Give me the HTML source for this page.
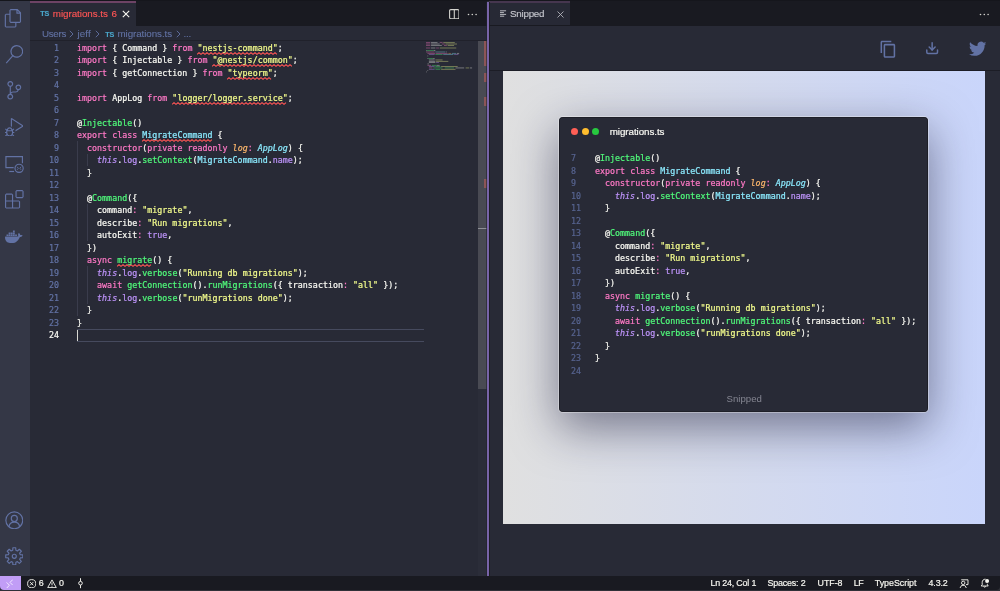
<!DOCTYPE html>
<html lang="en">
<head>
<meta charset="utf-8">
<title>migrations.ts — Snipped</title>
<style>
*{box-sizing:border-box;margin:0;padding:0}
html,body{width:1000px;height:591px;overflow:hidden;background:#282a36}
body{position:relative;font-family:"Liberation Sans",sans-serif;color:#f8f8f2;-webkit-font-smoothing:antialiased}
.abs{position:absolute}
#root{position:absolute;left:0;top:0;width:1000px;height:591px;will-change:transform}
#topstrip{left:0;top:0;width:1000px;height:1px;background:#15161c}
#activity{left:0;top:1px;width:30px;height:575px;background:#343746}
#activity svg{position:absolute;left:0;display:block}
#tabsL{left:30px;top:1px;width:457px;height:25px;background:#191a21}
#tabsR{left:489px;top:1px;width:511px;height:25px;background:#191a21}
.tab{-webkit-text-stroke:0.15px currentColor;position:absolute;top:0;height:25px;background:#282a36;font-size:9.8px;line-height:22px;white-space:nowrap}
.ts{position:absolute;top:-0.3px;color:#4aa5c9;font-size:7.2px;font-weight:bold;letter-spacing:-0.19px}
#sash{left:487px;top:1.500px;width:2.2px;height:574px;background:#7864a8;box-shadow:0.8px 0 0 #191a21,-0.6px 0 0 #22232c}
#crumbs{-webkit-text-stroke:0.1px currentColor;left:30px;top:26px;width:457px;height:15px;font-size:9.8px;line-height:15px;color:#6272a4;white-space:nowrap}
#crumbs span{position:absolute;top:0}
#crumbs .ts{top:0.5px}
pre{font-family:"DejaVu Sans Mono","Liberation Mono",monospace;font-size:8.3px;line-height:12.5px;letter-spacing:0.022px;white-space:pre;position:absolute;-webkit-text-stroke:0.22px currentColor}
.ln{color:#6272a4;text-align:right}
.cur{color:#f8f8f2}
.k{color:#ff79c6}.s{color:#f1fa8c}.g{color:#50fa7b}.c{color:#8be9fd}.p{color:#bd93f9}.o{color:#ffb86c}
.i{font-style:italic}
#status{left:0;top:575.5px;width:1000px;height:14px;border-radius:0 0 4px 4px;-webkit-text-stroke:0.18px currentColor;background:#191a21;font-size:8.9px;line-height:15.6px;color:#f8f8f2;white-space:nowrap}
#status span{position:absolute;top:0}
#remote{left:0;top:575.5px;width:21px;height:14px;background:#c19df6;border-radius:0 0 0 4px}
</style>
</head>
<body>
<div id="root">
<div id="topstrip" class="abs"></div>

<!-- activity bar -->
<div id="activity" class="abs"></div>
<svg class="abs" style="left:4.30px;top:9.30px" width="18.60" height="18.60" viewBox="0 0 24 24" ><path fill="#6272a4" d="M17.5 0h-9L7 1.5V6H2.5L1 7.5v15.07L2.5 24h12.07L16 22.57V18h4.7l1.3-1.43V4.5L17.5 0zm0 2.12l2.38 2.38H17.5V2.12zm-3 20.38h-12v-15H7v9.07L8.5 18h6v4.5zm6-6h-12v-15H16V6h4.5v10.5z"/></svg>
<svg class="abs" style="left:4.90px;top:45.30px" width="18.60" height="18.60" viewBox="0 0 24 24" ><path fill="#6272a4" d="M15.25 0a8.25 8.25 0 0 0-6.18 13.72L1 22.88l1.12 1 8.05-9.12A8.251 8.251 0 1 0 15.25.01V0zm0 15a6.75 6.75 0 1 1 0-13.5 6.75 6.75 0 0 1 0 13.5z"/></svg>
<svg class="abs" style="left:4.70px;top:81.30px" width="18.60" height="18.60" viewBox="0 0 24 24" ><path fill="#6272a4" d="M21.007 8.222A3.738 3.738 0 0 0 15.045 5.2a3.737 3.737 0 0 0 1.156 6.583 2.988 2.988 0 0 1-2.668 1.67h-2.99a4.456 4.456 0 0 0-2.989 1.165V7.4a3.737 3.737 0 1 0-1.494 0v9.117a3.776 3.776 0 1 0 1.816.099 2.99 2.99 0 0 1 2.668-1.667h2.99a4.484 4.484 0 0 0 4.223-3.039 3.736 3.736 0 0 0 3.25-3.687zM4.565 3.738a2.242 2.242 0 1 1 4.484 0 2.242 2.242 0 0 1-4.484 0zm4.484 16.441a2.242 2.242 0 1 1-4.484 0 2.242 2.242 0 0 1 4.484 0zm8.221-9.715a2.242 2.242 0 1 1 0-4.485 2.242 2.242 0 0 1 0 4.485z"/></svg>
<svg class="abs" style="left:4.70px;top:117.70px" width="18.60" height="18.60" viewBox="0 0 24 24" ><path fill="#6272a4" d="M10.94 13.5l-1.32 1.32a3.73 3.73 0 0 0-7.24 0L1.06 13.5 0 14.56l1.72 1.72-.22.22V18H0v1.5h1.5v.08c.077.489.214.966.41 1.42L0 22.94 1.06 24l1.65-1.65A4.308 4.308 0 0 0 6 24a4.31 4.31 0 0 0 3.29-1.65L10.94 24 12 22.94 10.09 21c.198-.464.336-.951.41-1.45v-.1H12V18h-1.5v-1.5l-.22-.22L12 14.56l-1.06-1.06zM6 13.5a2.25 2.25 0 0 1 2.25 2.25h-4.5A2.25 2.25 0 0 1 6 13.5zm3 6a3.33 3.33 0 0 1-3 3 3.33 3.33 0 0 1-3-3v-2.25h6v2.25zm14.76-9.9v1.26L13.5 17.37V15.6l8.5-5.37L9 2v9.46a5.07 5.07 0 0 0-1.5-.72V.63L8.64 0l15.12 9.6z"/></svg>
<svg class="abs" style="left:5.20px;top:154.70px" width="18.60" height="18.60" viewBox="0 0 24 24" ><g fill="none" stroke="#6272a4" stroke-width="1.5"><path d="M11.2 16.2H1.2V2h21.3v8.6"/><path d="M5.5 21.3h6.2" /><circle cx="18.2" cy="17.2" r="5.3"/><path d="M15.6 15.2l1.6 2-1.6 2M20.8 15.2l-1.6 2 1.6 2" stroke-width="1.1"/></g></svg>
<svg class="abs" style="left:5.10px;top:190.10px" width="18.60" height="18.60" viewBox="0 0 24 24" ><path fill="#6272a4" d="M13.5 1.5L15 0h7.5L24 1.5V9l-1.5 1.5H15L13.5 9V1.5zm1.5 0V9h7.5V1.5H15zM0 15V6l1.5-1.5H9L10.5 6v7.5H18l1.5 1.5v7.5L18 24H1.5L0 22.5V15zm9-1.5V6H1.5v7.5H9zM9 15H1.5v7.5H9V15zm1.5 7.5H18V15h-7.5v7.5z"/></svg>
<svg class="abs" style="left:5.20px;top:227.80px" width="17.60" height="17.60" viewBox="0 0 24 24" ><path fill="#6272a4" d="M13.983 11.078h2.119a.186.186 0 00.186-.185V9.006a.186.186 0 00-.186-.186h-2.119a.185.185 0 00-.185.185v1.888c0 .102.083.185.185.185m-2.954-5.43h2.118a.186.186 0 00.186-.186V3.574a.186.186 0 00-.186-.185h-2.118a.185.185 0 00-.185.185v1.888c0 .102.082.185.185.185m0 2.716h2.118a.187.187 0 00.186-.186V6.29a.186.186 0 00-.186-.185h-2.118a.185.185 0 00-.185.185v1.887c0 .102.082.185.185.186m-2.93 0h2.12a.186.186 0 00.184-.186V6.29a.185.185 0 00-.185-.185H8.1a.185.185 0 00-.185.185v1.887c0 .102.083.185.185.186m-2.964 0h2.119a.186.186 0 00.185-.186V6.29a.185.185 0 00-.185-.185H5.136a.186.186 0 00-.186.185v1.887c0 .102.084.185.186.186m5.893 2.715h2.118a.186.186 0 00.186-.185V9.006a.186.186 0 00-.186-.186h-2.118a.185.185 0 00-.185.185v1.888c0 .102.082.185.185.185m-2.93 0h2.12a.185.185 0 00.184-.185V9.006a.185.185 0 00-.184-.186h-2.12a.185.185 0 00-.184.185v1.888c0 .102.083.185.185.185m-2.964 0h2.119a.185.185 0 00.185-.185V9.006a.185.185 0 00-.184-.186h-2.12a.186.186 0 00-.186.186v1.887c0 .102.084.185.186.185m-2.92 0h2.12a.185.185 0 00.184-.185V9.006a.185.185 0 00-.184-.186h-2.12a.185.185 0 00-.184.185v1.888c0 .102.082.185.185.185M23.763 9.89c-.065-.051-.672-.51-1.954-.51-.338.001-.676.03-1.01.087-.248-1.7-1.653-2.53-1.716-2.566l-.344-.199-.226.327c-.284.438-.49.922-.612 1.43-.23.97-.09 1.882.403 2.661-.595.332-1.55.413-1.744.42H.751a.751.751 0 00-.75.748 11.376 11.376 0 00.692 4.062c.545 1.428 1.355 2.48 2.41 3.124 1.18.723 3.1 1.137 5.275 1.137.983.003 1.963-.086 2.93-.266a12.248 12.248 0 003.823-1.389c.98-.567 1.86-1.288 2.61-2.136 1.252-1.418 1.998-2.997 2.553-4.4h.221c1.372 0 2.215-.549 2.68-1.009.309-.293.55-.65.707-1.046l.098-.288Z"/></svg>
<svg class="abs" style="left:4.90px;top:510.70px" width="18.60" height="18.60" viewBox="0 0 24 24" ><g fill="none" stroke="#6272a4" stroke-width="1.5"><circle cx="12" cy="12" r="10.9"/><circle cx="12" cy="9.6" r="3.9"/><path d="M5.1 20.3c.5-3.4 3.3-5.9 6.9-5.9s6.4 2.500 6.900 5.900"/></g></svg>
<svg class="abs" style="left:4.90px;top:546.90px" width="18.60" height="18.60" viewBox="0 0 24 24" ><g fill="none" stroke="#6272a4" stroke-width="1.5" stroke-linejoin="round"><path d="M9.98 4.26 L10.16 0.95 L13.84 0.95 L14.02 4.26 L16.04 5.10 L18.51 2.89 L21.11 5.49 L18.90 7.96 L19.74 9.98 L23.05 10.16 L23.05 13.84 L19.74 14.02 L18.90 16.04 L21.11 18.51 L18.51 21.11 L16.04 18.90 L14.02 19.74 L13.84 23.05 L10.16 23.05 L9.98 19.74 L7.96 18.90 L5.49 21.11 L2.89 18.51 L5.10 16.04 L4.26 14.02 L0.95 13.84 L0.95 10.16 L4.26 9.98 L5.10 7.96 L2.89 5.49 L5.49 2.89 L7.96 5.10Z"/><circle cx="12" cy="12" r="2.6"/></g></svg>

<!-- left tabs -->
<div id="tabsL" class="abs">
  <div class="tab" style="left:0;width:106px;border-top:2px solid #6d4365;">
    <span class="ts" style="left:10.2px">TS</span>
    <span style="position:absolute;left:22.8px;top:0;color:#ff5555;letter-spacing:-0.034px">migrations.ts</span>
    <span style="position:absolute;left:81.4px;top:0;color:#ff5555;letter-spacing:-0.4px">6</span>
  </div>
</div>
<div id="crumbs" class="abs">
  <span style="left:12px;letter-spacing:-0.3px">Users</span>
  <span style="left:47.4px;letter-spacing:0.148px">jeff</span>
  <span class="ts" style="left:75.3px">TS</span>
  <span style="left:87.5px;letter-spacing:-0.081px">migrations.ts</span>
  <span style="left:153.6px;letter-spacing:-0.3px">...</span>
</div>

<!-- left editor -->
<div id="edL" class="abs" style="left:30px;top:41px;width:457px;height:536px">
  <div class="abs" style="left:47px;top:100px;width:1px;height:175px;background:#3a3c4c"></div>
  <div class="abs" style="left:57px;top:112.5px;width:1px;height:12.5px;background:#3a3c4c"></div>
  <div class="abs" style="left:57px;top:162.5px;width:1px;height:37.5px;background:#3a3c4c"></div>
  <div class="abs" style="left:57px;top:225px;width:1px;height:37.5px;background:#3a3c4c"></div>
  <div class="abs" style="left:47px;top:288.4px;width:347px;height:13px;border-top:1px solid #464a5e;border-bottom:1px solid #464a5e"></div>
  <div class="abs" style="left:47px;top:289.400px;width:1px;height:11px;background:#d8d8d2"></div>
<svg class="abs" style="left:167.0px;top:10.50px" width="80.0" height="3" viewBox="0 0 80.0 3"><path d="M0.0 2.4 L2.0 0.6 L4.0 2.4 L6.0 0.6 L8.0 2.4 L10.0 0.6 L12.0 2.4 L14.0 0.6 L16.0 2.4 L18.0 0.6 L20.0 2.4 L22.0 0.6 L24.0 2.4 L26.0 0.6 L28.0 2.4 L30.0 0.6 L32.0 2.4 L34.0 0.6 L36.0 2.4 L38.0 0.6 L40.0 2.4 L42.0 0.6 L44.0 2.4 L46.0 0.6 L48.0 2.4 L50.0 0.6 L52.0 2.4 L54.0 0.6 L56.0 2.4 L58.0 0.6 L60.0 2.4 L62.0 0.6 L64.0 2.4 L66.0 0.6 L68.0 2.4 L70.0 0.6 L72.0 2.4 L74.0 0.6 L76.0 2.4 L78.0 0.6 L80.0 2.4" fill="none" stroke="#ff5555" stroke-width="1.05" stroke-linejoin="round"/></svg>
<svg class="abs" style="left:182.0px;top:23.00px" width="80.0" height="3" viewBox="0 0 80.0 3"><path d="M0.0 2.4 L2.0 0.6 L4.0 2.4 L6.0 0.6 L8.0 2.4 L10.0 0.6 L12.0 2.4 L14.0 0.6 L16.0 2.4 L18.0 0.6 L20.0 2.4 L22.0 0.6 L24.0 2.4 L26.0 0.6 L28.0 2.4 L30.0 0.6 L32.0 2.4 L34.0 0.6 L36.0 2.4 L38.0 0.6 L40.0 2.4 L42.0 0.6 L44.0 2.4 L46.0 0.6 L48.0 2.4 L50.0 0.6 L52.0 2.4 L54.0 0.6 L56.0 2.4 L58.0 0.6 L60.0 2.4 L62.0 0.6 L64.0 2.4 L66.0 0.6 L68.0 2.4 L70.0 0.6 L72.0 2.4 L74.0 0.6 L76.0 2.4 L78.0 0.6 L80.0 2.4" fill="none" stroke="#ff5555" stroke-width="1.05" stroke-linejoin="round"/></svg>
<svg class="abs" style="left:197.0px;top:35.50px" width="45.0" height="3" viewBox="0 0 45.0 3"><path d="M0.0 2.4 L2.0 0.6 L4.0 2.4 L6.0 0.6 L8.0 2.4 L10.0 0.6 L12.0 2.4 L14.0 0.6 L16.0 2.4 L18.0 0.6 L20.0 2.4 L22.0 0.6 L24.0 2.4 L26.0 0.6 L28.0 2.4 L30.0 0.6 L32.0 2.4 L34.0 0.6 L36.0 2.4 L38.0 0.6 L40.0 2.4 L42.0 0.6 L44.0 2.4" fill="none" stroke="#ff5555" stroke-width="1.05" stroke-linejoin="round"/></svg>
<svg class="abs" style="left:142.0px;top:60.50px" width="115.0" height="3" viewBox="0 0 115.0 3"><path d="M0.0 2.4 L2.0 0.6 L4.0 2.4 L6.0 0.6 L8.0 2.4 L10.0 0.6 L12.0 2.4 L14.0 0.6 L16.0 2.4 L18.0 0.6 L20.0 2.4 L22.0 0.6 L24.0 2.4 L26.0 0.6 L28.0 2.4 L30.0 0.6 L32.0 2.4 L34.0 0.6 L36.0 2.4 L38.0 0.6 L40.0 2.4 L42.0 0.6 L44.0 2.4 L46.0 0.6 L48.0 2.4 L50.0 0.6 L52.0 2.4 L54.0 0.6 L56.0 2.4 L58.0 0.6 L60.0 2.4 L62.0 0.6 L64.0 2.4 L66.0 0.6 L68.0 2.4 L70.0 0.6 L72.0 2.4 L74.0 0.6 L76.0 2.4 L78.0 0.6 L80.0 2.4 L82.0 0.6 L84.0 2.4 L86.0 0.6 L88.0 2.4 L90.0 0.6 L92.0 2.4 L94.0 0.6 L96.0 2.4 L98.0 0.6 L100.0 2.4 L102.0 0.6 L104.0 2.4 L106.0 0.6 L108.0 2.4 L110.0 0.6 L112.0 2.4 L114.0 0.6" fill="none" stroke="#ff5555" stroke-width="1.05" stroke-linejoin="round"/></svg>
<svg class="abs" style="left:112.0px;top:98.00px" width="70.0" height="3" viewBox="0 0 70.0 3"><path d="M0.0 2.4 L2.0 0.6 L4.0 2.4 L6.0 0.6 L8.0 2.4 L10.0 0.6 L12.0 2.4 L14.0 0.6 L16.0 2.4 L18.0 0.6 L20.0 2.4 L22.0 0.6 L24.0 2.4 L26.0 0.6 L28.0 2.4 L30.0 0.6 L32.0 2.4 L34.0 0.6 L36.0 2.4 L38.0 0.6 L40.0 2.4 L42.0 0.6 L44.0 2.4 L46.0 0.6 L48.0 2.4 L50.0 0.6 L52.0 2.4 L54.0 0.6 L56.0 2.4 L58.0 0.6 L60.0 2.4 L62.0 0.6 L64.0 2.4 L66.0 0.6 L68.0 2.4 L70.0 0.6" fill="none" stroke="#ff5555" stroke-width="1.05" stroke-linejoin="round"/></svg>
<svg class="abs" style="left:87.0px;top:223.00px" width="35.0" height="3" viewBox="0 0 35.0 3"><path d="M0.0 2.4 L2.0 0.6 L4.0 2.4 L6.0 0.6 L8.0 2.4 L10.0 0.6 L12.0 2.4 L14.0 0.6 L16.0 2.4 L18.0 0.6 L20.0 2.4 L22.0 0.6 L24.0 2.4 L26.0 0.6 L28.0 2.4 L30.0 0.6 L32.0 2.4 L34.0 0.6" fill="none" stroke="#ff5555" stroke-width="1.05" stroke-linejoin="round"/></svg>
<pre class="ln" style="left:0;top:0.7px;width:29px">1
2
3
4
5
6
7
8
9
10
11
12
13
14
15
16
17
18
19
20
21
22
23
<span class="cur">24</span></pre>
<pre style="left:47px;top:0.7px"><span class="k">import</span> { Command } <span class="k">from</span> <span class="sq s">&quot;nestjs-command&quot;</span>;
<span class="k">import</span> { Injectable } <span class="k">from</span> <span class="sq s">&quot;@nestjs/common&quot;</span>;
<span class="k">import</span> { getConnection } <span class="k">from</span> <span class="sq s">&quot;typeorm&quot;</span>;

<span class="k">import</span> AppLog <span class="k">from</span> <span class="sq s">&quot;logger/logger.service&quot;</span>;

@<span class="g">Injectable</span>()
<span class="k">export</span> <span class="k">class</span> <span class="sq c">MigrateCommand</span> {
  <span class="k">constructor</span>(<span class="k">private</span> <span class="k">readonly</span> <span class="o i">log</span><span class="k">:</span> <span class="c i">AppLog</span>) {
    <span class="p i">this</span>.<span class="p">log</span>.<span class="g">setContext</span>(<span class="c">MigrateCommand</span>.<span class="p">name</span>);
  }

  @<span class="g">Command</span>({
    command<span class="k">:</span> <span class="s">&quot;migrate&quot;</span>,
    describe<span class="k">:</span> <span class="s">&quot;Run migrations&quot;</span>,
    autoExit<span class="k">:</span> <span class="p">true</span>,
  })
  <span class="k">async</span> <span class="sq g">migrate</span>() {
    <span class="p i">this</span>.<span class="p">log</span>.<span class="g">verbose</span>(<span class="s">&quot;Running db migrations&quot;</span>);
    <span class="k">await</span> <span class="g">getConnection</span>().<span class="g">runMigrations</span>({ transaction<span class="k">:</span> <span class="s">&quot;all&quot;</span> });
    <span class="p i">this</span>.<span class="p">log</span>.<span class="g">verbose</span>(<span class="s">&quot;runMigrations done&quot;</span>);
  }
}
</pre>
</div>

<!-- snipped panel -->
<div id="snip" class="abs" style="left:503px;top:71px;width:482px;height:453px;background:linear-gradient(90deg,#e0e0e0 0%,#c9d5fb 100%)"></div>
<div id="card" class="abs" style="box-sizing:content-box;left:557.7px;top:115.6px;width:369.7px;height:295.6px;background:#282a36;background-clip:padding-box;border:1.4px solid rgba(255,255,255,0.34);border-radius:5px;box-shadow:0 15px 46px rgba(20,20,50,0.5), inset 0 0 0 0.8px #1b1c24">
  <div class="abs" style="left:12.4px;top:11.1px;width:7.2px;height:7.2px;border-radius:50%;background:#ff5f56"></div>
  <div class="abs" style="left:22.9px;top:11.1px;width:7.2px;height:7.2px;border-radius:50%;background:#ffbd2e"></div>
  <div class="abs" style="left:33.3px;top:11.1px;width:7.2px;height:7.2px;border-radius:50%;background:#27c93f"></div>
  <div class="abs" style="left:51.1px;top:8.5px;font-size:9.8px;line-height:13px;color:#f8f8f2;letter-spacing:-0.073px;-webkit-text-stroke:0.2px #f8f8f2">migrations.ts</div>
  <div class="abs" style="left:167.9px;top:276.6px;font-size:9.65px;line-height:12px;color:#858692">Snipped</div>
<pre class="ln" style="left:12.2px;top:35.8px;text-align:left;color:#56638f">7
8
9
10
11
12
13
14
15
16
17
18
19
20
21
22
23
24</pre>
<pre style="left:36.3px;top:35.8px">@<span class="g">Injectable</span>()
<span class="k">export</span> <span class="k">class</span> <span class="c">MigrateCommand</span> {
  <span class="k">constructor</span>(<span class="k">private</span> <span class="k">readonly</span> <span class="o i">log</span><span class="k">:</span> <span class="c i">AppLog</span>) {
    <span class="p i">this</span>.<span class="p">log</span>.<span class="g">setContext</span>(<span class="c">MigrateCommand</span>.<span class="p">name</span>);
  }

  @<span class="g">Command</span>({
    command<span class="k">:</span> <span class="s">&quot;migrate&quot;</span>,
    describe<span class="k">:</span> <span class="s">&quot;Run migrations&quot;</span>,
    autoExit<span class="k">:</span> <span class="p">true</span>,
  })
  <span class="k">async</span> <span class="g">migrate</span>() {
    <span class="p i">this</span>.<span class="p">log</span>.<span class="g">verbose</span>(<span class="s">&quot;Running db migrations&quot;</span>);
    <span class="k">await</span> <span class="g">getConnection</span>().<span class="g">runMigrations</span>({ transaction<span class="k">:</span> <span class="s">&quot;all&quot;</span> });
    <span class="p i">this</span>.<span class="p">log</span>.<span class="g">verbose</span>(<span class="s">&quot;runMigrations done&quot;</span>);
  }
}
</pre>
</div>

<!-- right tabs -->
<div id="tabsR" class="abs">
  <div class="tab" style="left:0;width:81px;height:24.3px;background:#272935;border-top:2px solid #46364f;color:#c3c4cb">
    <span style="position:absolute;left:21px;top:0;letter-spacing:-0.238px">Snipped</span>
  </div>
</div>

<svg class="abs" style="left:122.4px;top:10px" width="8" height="8" viewBox="0 0 8 8"><path d="M0.8 0.8L7.2 7.2M7.2 0.8L0.8 7.2" stroke="#f8f8f2" stroke-width="1.1" fill="none"/></svg>
<svg class="abs" style="left:448.6px;top:8.6px" width="10.6" height="10.4" viewBox="0 0 10.6 10.4"><rect x="0.6" y="0.6" width="9.4" height="9.2" rx="1.2" fill="none" stroke="#d4d4cf" stroke-width="1.1"/><path d="M5.3 0.6V9.8" stroke="#d4d4cf" stroke-width="1.1"/></svg>
<svg class="abs" style="left:466.5px;top:13.20px" width="11" height="3" viewBox="0 0 11 3"><circle cx="1.5" cy="1.5" r="0.8" fill="#d4d4cf"/><circle cx="5.3" cy="1.5" r="0.8" fill="#d4d4cf"/><circle cx="9.1" cy="1.5" r="0.8" fill="#d4d4cf"/></svg>
<svg class="abs" style="left:978.7px;top:13.20px" width="11" height="3" viewBox="0 0 11 3"><circle cx="1.5" cy="1.5" r="0.8" fill="#d4d4cf"/><circle cx="5.3" cy="1.5" r="0.8" fill="#d4d4cf"/><circle cx="9.1" cy="1.5" r="0.8" fill="#d4d4cf"/></svg>
<svg class="abs" style="left:499.8px;top:10.2px" width="7" height="8" viewBox="0 0 7 8"><path d="M0 0.8H6.1M0 2.6H3.9M0 4.4H6.1M0 6.2H4.2" stroke="#d2d3d8" stroke-width="0.85" fill="none"/></svg>
<svg class="abs" style="left:557.3px;top:11px" width="7" height="7" viewBox="0 0 7 7"><path d="M0.5 0.5L6.5 6.5M6.500 0.5L0.5 6.5" stroke="#b9bac2" stroke-width="0.85" fill="none"/></svg>
<div class="abs" style="left:489px;top:70.4px;width:511px;height:1px;background:#1c1d26"></div>
<div class="abs" style="left:30px;top:40px;width:457px;height:1px;background:#20212b"></div>
<svg class="abs" style="left:878.70px;top:39.70px" width="18.50" height="18.50" viewBox="0 0 24 24" ><path fill="#6272a4" d="M16 1H4c-1.1 0-2 .9-2 2v14h2V3h12V1zm3 4H8c-1.100 0-2 .9-2 2v14c0 1.100.9 2 2 2h11c1.100 0 2-.9 2-2V7c0-1.100-.9-2-2-2zm0 16H8V7h11v14z"/></svg>
<svg class="abs" style="left:925.15px;top:41.35px" width="14.30" height="14.30" viewBox="0 0 24 24" ><g fill="none" stroke="#6272a4" stroke-width="2.5" stroke-linecap="round" stroke-linejoin="round"><path d="M21 15v4a2 2 0 0 1-2 2H5a2 2 0 0 1-2-2v-4"/><path d="M7 10l5 5 5-5"/><path d="M12 15V3"/></g></svg>
<svg class="abs" style="left:968.70px;top:39.50px" width="17.40" height="17.40" viewBox="0 0 24 24" ><path fill="#6272a4" d="M23.953 4.57a10 10 0 01-2.825.775 4.958 4.958 0 002.163-2.723c-.951.555-2.005.959-3.127 1.184a4.920 4.920 0 00-8.384 4.482C7.69 8.095 4.067 6.13 1.640 3.162a4.822 4.822 0 00-.666 2.475c0 1.710.870 3.213 2.188 4.096a4.904 4.904 0 01-2.228-.616v.06a4.923 4.923 0 003.946 4.827 4.996 4.996 0 01-2.212.085 4.936 4.936 0 004.604 3.417 9.867 9.867 0 01-6.102 2.105c-.39 0-.779-.023-1.170-.067a13.995 13.995 0 007.557 2.209c9.053 0 13.998-7.496 13.998-13.985 0-.21 0-.42-.015-.63A9.935 9.935 0 0024 4.590z"/></svg>
<svg class="abs" style="left:426.2px;top:41.8px;opacity:0.5" width="50" height="34" viewBox="0 0 50 34"><rect x="0.00" y="0.30" width="4.32" height="0.75" fill="#ff79c6"/><rect x="5.04" y="0.30" width="6.48" height="0.75" fill="#f8f8f2"/><rect x="13.68" y="0.30" width="2.88" height="0.75" fill="#ff79c6"/><rect x="17.28" y="0.30" width="11.52" height="0.75" fill="#f1fa8c"/><rect x="0.00" y="1.63" width="4.32" height="0.75" fill="#ff79c6"/><rect x="5.04" y="1.63" width="8.64" height="0.75" fill="#f8f8f2"/><rect x="15.84" y="1.63" width="2.88" height="0.75" fill="#ff79c6"/><rect x="19.44" y="1.63" width="11.52" height="0.75" fill="#f1fa8c"/><rect x="0.00" y="2.96" width="4.32" height="0.75" fill="#ff79c6"/><rect x="5.04" y="2.96" width="10.80" height="0.75" fill="#f8f8f2"/><rect x="18.00" y="2.96" width="2.88" height="0.75" fill="#ff79c6"/><rect x="21.60" y="2.96" width="6.48" height="0.75" fill="#f1fa8c"/><rect x="0.00" y="5.62" width="4.32" height="0.75" fill="#ff79c6"/><rect x="5.04" y="5.62" width="4.32" height="0.75" fill="#f8f8f2"/><rect x="10.08" y="5.62" width="2.88" height="0.75" fill="#ff79c6"/><rect x="13.68" y="5.62" width="16.56" height="0.75" fill="#f1fa8c"/><rect x="0.00" y="8.28" width="0.72" height="0.75" fill="#f8f8f2"/><rect x="0.72" y="8.28" width="7.20" height="0.75" fill="#50fa7b"/><rect x="7.92" y="8.28" width="1.44" height="0.75" fill="#f8f8f2"/><rect x="0.00" y="9.61" width="8.64" height="0.75" fill="#ff79c6"/><rect x="9.36" y="9.61" width="10.08" height="0.75" fill="#8be9fd"/><rect x="20.16" y="9.61" width="0.72" height="0.75" fill="#f8f8f2"/><rect x="1.44" y="10.94" width="7.92" height="0.75" fill="#ff79c6"/><rect x="10.08" y="10.94" width="11.52" height="0.75" fill="#ff79c6"/><rect x="22.32" y="10.94" width="2.88" height="0.75" fill="#ffb86c"/><rect x="25.92" y="10.94" width="4.32" height="0.75" fill="#8be9fd"/><rect x="30.96" y="10.94" width="2.16" height="0.75" fill="#f8f8f2"/><rect x="2.88" y="12.27" width="5.76" height="0.75" fill="#bd93f9"/><rect x="9.36" y="12.27" width="7.20" height="0.75" fill="#50fa7b"/><rect x="17.28" y="12.27" width="10.08" height="0.75" fill="#8be9fd"/><rect x="28.08" y="12.27" width="4.32" height="0.75" fill="#bd93f9"/><rect x="1.44" y="13.60" width="0.72" height="0.75" fill="#f8f8f2"/><rect x="1.44" y="16.26" width="0.72" height="0.75" fill="#f8f8f2"/><rect x="2.16" y="16.26" width="5.04" height="0.75" fill="#50fa7b"/><rect x="7.20" y="16.26" width="1.44" height="0.75" fill="#f8f8f2"/><rect x="2.88" y="17.59" width="5.76" height="0.75" fill="#f8f8f2"/><rect x="9.36" y="17.59" width="7.20" height="0.75" fill="#f1fa8c"/><rect x="2.88" y="18.92" width="6.48" height="0.75" fill="#f8f8f2"/><rect x="10.08" y="18.92" width="12.24" height="0.75" fill="#f1fa8c"/><rect x="2.88" y="20.25" width="6.48" height="0.75" fill="#f8f8f2"/><rect x="10.08" y="20.25" width="2.88" height="0.75" fill="#bd93f9"/><rect x="1.44" y="21.58" width="1.44" height="0.75" fill="#f8f8f2"/><rect x="1.44" y="22.91" width="3.60" height="0.75" fill="#ff79c6"/><rect x="5.76" y="22.91" width="5.04" height="0.75" fill="#50fa7b"/><rect x="10.80" y="22.91" width="2.88" height="0.75" fill="#f8f8f2"/><rect x="2.88" y="24.24" width="5.76" height="0.75" fill="#bd93f9"/><rect x="9.36" y="24.24" width="5.04" height="0.75" fill="#50fa7b"/><rect x="15.12" y="24.24" width="16.56" height="0.75" fill="#f1fa8c"/><rect x="2.88" y="25.57" width="3.60" height="0.75" fill="#ff79c6"/><rect x="7.20" y="25.57" width="9.36" height="0.75" fill="#50fa7b"/><rect x="18.72" y="25.57" width="9.36" height="0.75" fill="#50fa7b"/><rect x="29.52" y="25.57" width="8.64" height="0.75" fill="#f8f8f2"/><rect x="39.60" y="25.57" width="3.60" height="0.75" fill="#f1fa8c"/><rect x="43.92" y="25.57" width="2.16" height="0.75" fill="#f8f8f2"/><rect x="2.88" y="26.90" width="5.76" height="0.75" fill="#bd93f9"/><rect x="9.36" y="26.90" width="5.04" height="0.75" fill="#50fa7b"/><rect x="15.12" y="26.90" width="14.40" height="0.75" fill="#f1fa8c"/><rect x="1.44" y="28.23" width="0.72" height="0.75" fill="#f8f8f2"/><rect x="0.00" y="29.56" width="0.72" height="0.75" fill="#f8f8f2"/></svg>
<div class="abs" style="left:478px;top:41px;width:9px;height:535px;background:#2b2d39"></div>
<div class="abs" style="left:478px;top:41px;width:9px;height:348px;background:#494a53"></div>
<div class="abs" style="left:484px;top:41px;width:3px;height:25px;background:#8c5557"></div>
<div class="abs" style="left:484px;top:73px;width:3px;height:9px;background:#8c5557"></div>
<div class="abs" style="left:484px;top:97px;width:3px;height:9px;background:#8c5557"></div>
<div class="abs" style="left:484px;top:179px;width:3px;height:9px;background:#8c5557"></div>
<div class="abs" style="left:478px;top:227.5px;width:9px;height:1.5px;background:#8e8f96"></div>
<div id="sash" class="abs"></div>

<div class="abs" style="left:0;top:583px;width:1000px;height:8px;background:#2f3037"></div>
<!-- status -->
<div id="status" class="abs">
  <span style="left:38.8px">6</span>
  <span style="left:58.9px">0</span>
  <span style="left:710.4px;letter-spacing:-0.17px">Ln 24, Col 1</span>
  <span style="left:767.4px;letter-spacing:-0.16px">Spaces: 2</span>
  <span style="left:817.6px;letter-spacing:-0.06px">UTF-8</span>
  <span style="left:853.8px;letter-spacing:-0.38px">LF</span>
  <span style="left:874.8px;letter-spacing:-0.03px">TypeScript</span>
  <span style="left:928.6px;letter-spacing:-0.17px">4.3.2</span>
</div>
<div id="remote" class="abs"></div>
<svg class="abs" style="left:5.6px;top:578.6px" width="7.4" height="9.6" viewBox="0 0 7.4 9.6"><path d="M0.6 3.4L3.4 6.2L0.8 9M6.800 0.6L4 3.4L6.6 6.000" fill="none" stroke="#f3eaff" stroke-width="0.95"/></svg>
<svg class="abs" style="left:26.8px;top:578.8px" width="9.4" height="9.4" viewBox="0 0 9.4 9.400"><circle cx="4.7" cy="4.7" r="4.1" fill="none" stroke="#f8f8f2" stroke-width="0.9"/><path d="M3.1 3.1L6.300 6.300M6.3 3.1L3.1 6.3" stroke="#f8f8f2" stroke-width="0.9"/></svg>
<svg class="abs" style="left:46.8px;top:578.8px" width="10" height="9.4" viewBox="0 0 10 9.4"><path d="M5 0.900L9.3 8.6H0.7Z" fill="none" stroke="#f8f8f2" stroke-width="0.9" stroke-linejoin="round"/><path d="M5 3.4V6.1M5 6.8V7.700" stroke="#f8f8f2" stroke-width="0.9"/></svg>
<svg class="abs" style="left:77.6px;top:578.2px" width="5" height="10.4" viewBox="0 0 5 10.4"><path d="M2.5 0.2V3.3M2.5 7.100V10.200" stroke="#f8f8f2" stroke-width="0.95"/><circle cx="2.5" cy="5.2" r="1.800" fill="none" stroke="#f8f8f2" stroke-width="0.95"/></svg>
<svg class="abs" style="left:959.3px;top:578.6px" width="9.6" height="9.600" viewBox="0 0 9.6 9.6"><path d="M2.2 0.8H9V5.600H7" fill="none" stroke="#f8f8f2" stroke-width="0.9" stroke-linejoin="round"/><circle cx="4.2" cy="3.900" r="1.700" fill="none" stroke="#f8f8f2" stroke-width="0.9"/><path d="M0.8 9.4L2.6 6.4H5.8L7.600 9.400" fill="none" stroke="#f8f8f2" stroke-width="0.9" stroke-linejoin="round"/></svg>
<svg class="abs" style="left:980.4px;top:578.2px" width="10.4" height="10.4" viewBox="0 0 10.4 10.4"><path d="M5.6 1.200C3.400 1.000 2.200 2.600 2.200 4.400V6.800L1.200 8.000H8.200L7.400 6.800V5.800" fill="none" stroke="#f8f8f2" stroke-width="0.9" stroke-linejoin="round"/><path d="M3.7 8.3C3.900 9.500 5.500 9.500 5.700 8.300" fill="none" stroke="#f8f8f2" stroke-width="0.9"/><circle cx="7.100" cy="2.900" r="2.000" fill="#f8f8f2"/></svg>
<svg class="abs" style="left:69.2px;top:29.9px" width="5" height="8" viewBox="0 0 5 8"><path d="M0.8 0.8L4.000 4L0.8 7.200" fill="none" stroke="#6272a4" stroke-width="0.9"/></svg>
<svg class="abs" style="left:94.6px;top:29.9px" width="5" height="8" viewBox="0 0 5 8"><path d="M0.8 0.8L4.000 4L0.8 7.200" fill="none" stroke="#6272a4" stroke-width="0.9"/></svg>
<svg class="abs" style="left:175.8px;top:29.9px" width="5" height="8" viewBox="0 0 5 8"><path d="M0.8 0.8L4.000 4L0.8 7.200" fill="none" stroke="#6272a4" stroke-width="0.9"/></svg>
</div>
</body>
</html>
